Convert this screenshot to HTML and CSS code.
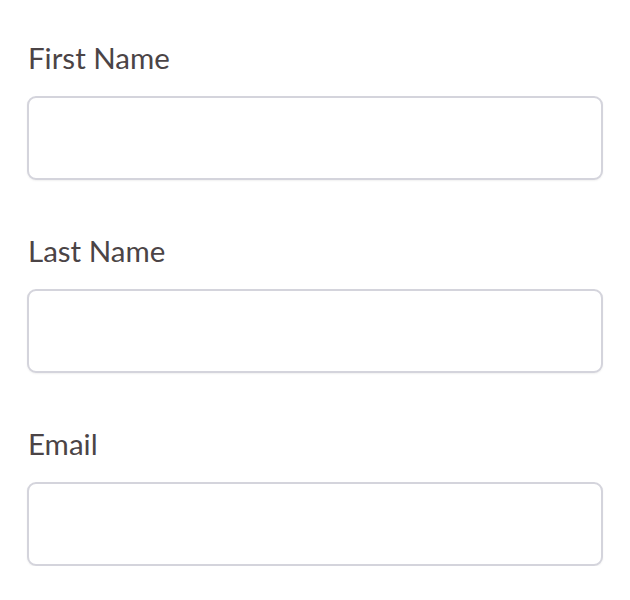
FILE: index.html
```html
<!DOCTYPE html>
<html>
<head>
<meta charset="utf-8">
<link rel="stylesheet" href="styles.css">
</head>
<body>
<form class="form">
  <div class="field">
    <label class="label" for="first">First Name</label>
    <input class="input" id="first" type="text">
  </div>
  <div class="field">
    <label class="label" for="last">Last Name</label>
    <input class="input" id="last" type="text">
  </div>
  <div class="field">
    <label class="label" for="email">Email</label>
    <input class="input" id="email" type="email">
  </div>
</form>
</body>
</html>
```
FILE: styles.css
```css
html, body {
  margin: 0;
  padding: 0;
  background: #ffffff;
}
.form {
  padding: 38px 27px 0 27px;
  display: flex;
  flex-direction: column;
  gap: 51px;
}
.field {
  display: flex;
  flex-direction: column;
  gap: 18px;
}
.label {
  font-family: Lato, "Liberation Sans", sans-serif;
  font-size: 29.5px;
  line-height: 40px;
  color: #4b4446;
  padding-left: 1px;
}
.input {
  box-sizing: border-box;
  width: 576px;
  height: 84px;
  margin: 0;
  border: 2px solid #d4d4dc;
  border-radius: 9px;
  background: #ffffff;
  box-shadow: 0 1px 2px rgba(0,0,0,0.06);
  outline: none;
}
```
